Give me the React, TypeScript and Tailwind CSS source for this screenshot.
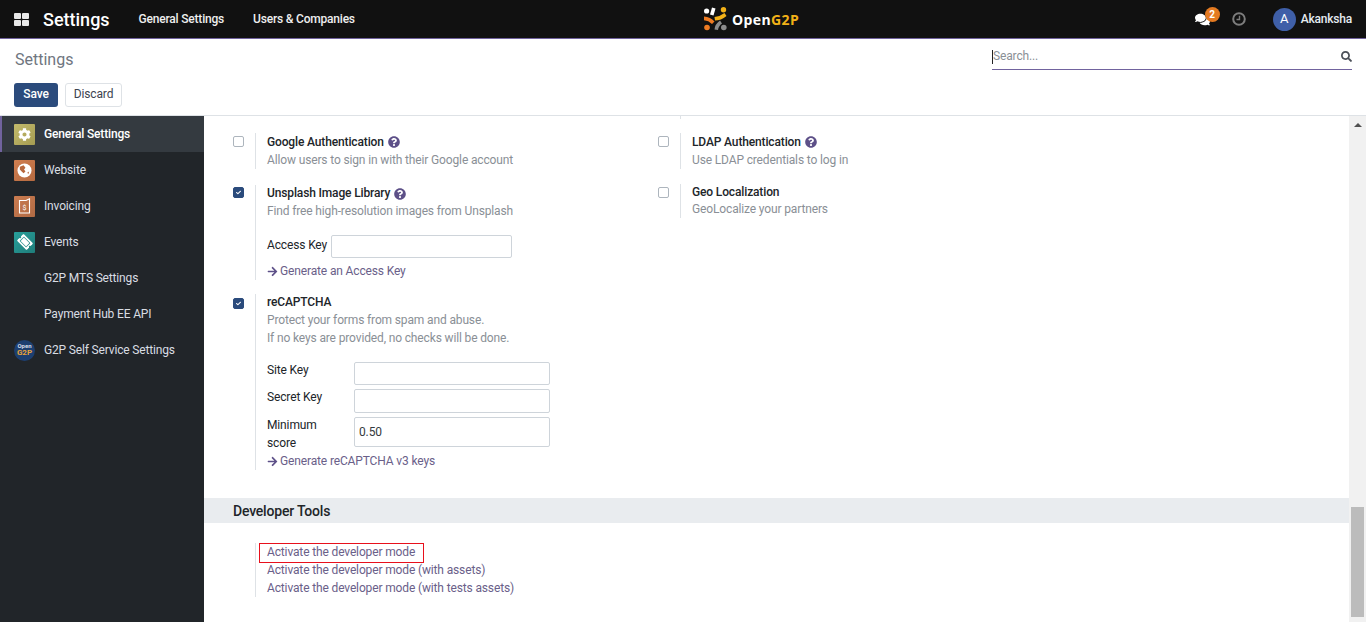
import * as React from "react";
import { FaComments, FaCog, FaQuestionCircle, FaArrowRight, FaCheck, FaTicketAlt, FaSearch } from "react-icons/fa";

const AppIcon: React.FC<{ bg: string; children: React.ReactNode }> = ({ bg, children }) => (
  <span className={`flex h-[21px] w-[21px] items-center justify-center rounded-[1px] bg-linear-to-br text-white ${bg}`}>
    {children}
  </span>
);

const GlobeIcon = () => (
  <svg width="15" height="15" viewBox="0 0 16 16">
    <circle cx="8" cy="8" r="7.5" fill="#fff" />
    <path d="M3 4 L7 2.5 L9 5 L7.5 7 L9 9 L7 11 L5 9 L3 7 Z M11 10 L13 9 L12 12 Z" fill="#b8683d" />
  </svg>
);

const InvoiceIcon = () => (
  <svg width="13" height="16" viewBox="0 0 13 16" fill="none" stroke="#fff" strokeWidth="1.1">
    <path d="M1.5 2.5 H8 L11.5 .8 V15 H1.5 Z" />
    <text x="6.5" y="11.5" fontSize="7" fill="#fff" stroke="none" textAnchor="middle" fontFamily="Roboto, sans-serif">$</text>
  </svg>
);

const G2pBadge = () => (
  <span className="flex h-[21px] w-[21px] flex-col items-center justify-center rounded-full bg-[#1d3f70] font-bold">
    <span className="text-[6px] leading-[6px] text-[#d5dce6]">Open</span>
    <span className="text-[8px] leading-[8px] text-[#e8a33a]">G2P</span>
  </span>
);

const sideItems: { label: string; icon?: React.ReactNode; active?: boolean }[] = [
  { label: "General Settings", active: true, icon: <AppIcon bg="from-[#c4bb6c] to-[#a59c52]"><FaCog size={13} /></AppIcon> },
  { label: "Website", icon: <AppIcon bg="from-[#d17f50] to-[#b56a40]"><GlobeIcon /></AppIcon> },
  { label: "Invoicing", icon: <AppIcon bg="from-[#cb7c50] to-[#b06a44]"><InvoiceIcon /></AppIcon> },
  { label: "Events", icon: <AppIcon bg="from-[#28a09b] to-[#1f7d7a]"><FaTicketAlt size={14} className="rotate-45" /></AppIcon> },
  { label: "G2P MTS Settings" },
  { label: "Payment Hub EE API" },
  { label: "G2P Self Service Settings", icon: <G2pBadge /> },
];

const Logo = () => (
  <div className="flex items-center">
    <svg width="23" height="24" viewBox="0 0 23 24">
      <circle cx="2.6" cy="4" r="2.6" fill="#fff" />
      <path d="M8 .5 L11.5 1.5 L9.5 8.5 L6 7.5 Z" fill="#fff" />
      <circle cx="19.5" cy="2.8" r="2.7" fill="#f2b118" />
      <path d="M10.5 10 Q16 9.5 20.5 6 L22.5 9 Q17 13.5 11 13.5 Z" fill="#f2b118" />
      <path d="M0 9.5 Q6.5 10 10.5 14.5 L8 17 Q4.5 13.5 0 13.2 Z" fill="#ee7b22" />
      <circle cx="3" cy="20.5" r="2.8" fill="#ee7b22" />
      <path d="M10.5 22.5 Q11 17 16 13.5 L18 16.5 Q14.5 19 14 23 Z" fill="#8c8c8c" />
      <circle cx="19.8" cy="20.5" r="2.8" fill="#8c8c8c" />
    </svg>
    <span className="ml-[5px] text-[14px] font-bold tracking-[0.4px] text-white font-['Open_Sans',sans-serif]">
      Open<span className="text-[#f2b118]">G2P</span>
    </span>
  </div>
);

const Navbar = () => (
  <header className="flex h-[39px] shrink-0 items-center border-b border-[#71639e] bg-[#111111] text-white">
    <div className="flex w-[683px] items-center">
      <div className="ml-[14px] grid h-[13px] w-[15px] grid-cols-2 gap-[1px]">
        <span className="rounded-[1px] bg-[#e9e9e9]" />
        <span className="rounded-[1px] bg-[#e9e9e9]" />
        <span className="rounded-[1px] bg-[#e9e9e9]" />
        <span className="rounded-[1px] bg-[#e9e9e9]" />
      </div>
      <span className="ml-[14px] text-[18px] font-medium">Settings</span>
      <span className="ml-[29px] text-[12px] font-medium tracking-[-0.2px] text-[#eeeeee]">General Settings</span>
      <span className="ml-[29px] text-[12px] font-medium tracking-[-0.2px] text-[#eeeeee]">Users &amp; Companies</span>
    </div>
    <div className="ml-[21px]"><Logo /></div>
    <div className="ml-auto flex items-center pr-[14px]">
      <span className="relative mr-[22px]">
        <FaComments size={15} className="text-white" />
        <span className="absolute left-[10px] -top-[5px] flex h-[15px] w-[15px] items-center justify-center rounded-full bg-[#e47a21] text-[10px] font-bold">2</span>
      </span>
      <svg width="14" height="14" viewBox="0 0 14 14" fill="none" stroke="#7d7d7d" className="mr-[27px]">
        <circle cx="7" cy="7" r="5.8" strokeWidth="2" />
        <path d="M7.5 3.8 V7.5 H4.5" strokeWidth="1.4" />
      </svg>
      <span className="mr-[5px] flex h-[23px] w-[23px] items-center justify-center rounded-full bg-[#3f5fa8] text-[13px]">A</span>
      <span className="text-[12px] font-medium tracking-[-0.2px] text-[#e6ecf2]">Akanksha</span>
    </div>
  </header>
);

const ControlPanel = () => (
  <div className="flex h-[77px] shrink-0 border-b border-[#dee2e6] bg-white">
    <div className="flex flex-1 flex-col pl-[14px]">
      <div className="mt-[9px] pl-px text-[16px] leading-[24px] text-[#6f7680]">Settings</div>
      <div className="mt-[11px] flex gap-[7px]">
        <button className="h-[24px] w-[44px] rounded-[3px] bg-[#2b4b7c] pb-[2px] text-[12px] font-medium tracking-[-0.14px] text-white">Save</button>
        <button className="h-[24px] w-[57px] rounded-[3px] border border-[#dee2e6] bg-white pb-[2px] text-[12px] tracking-[-0.14px] text-[#3c4350]">Discard</button>
      </div>
    </div>
    <div className="mr-[14px] mt-[8px] flex h-[23px] w-[360px] items-start border-b border-[#71639e] pt-[3px]">
      <span className="h-[14px] w-px bg-[#222]" />
      <span className="-mt-px flex-1 text-[12px] leading-[14px] tracking-[-0.14px] text-[#8a8f96]">Search...</span>
      <FaSearch size={11} className="mt-[1px] text-[#4b5058]" />
    </div>
  </div>
);

const Sidebar = () => (
  <nav className="w-[204px] shrink-0 bg-[#212529]">
    {sideItems.map((item) => (
      <div
        key={item.label}
        className={`flex h-[36px] items-center border-l-2 pl-[12px] ${item.active ? "border-[#71639e] bg-[#343a40] text-white" : "border-transparent text-[#d9dde3]"}`}
      >
        <span className="flex w-[30px] shrink-0">{item.icon}</span>
        <span className={`text-[12px] tracking-[-0.16px] ${item.active ? "font-medium" : ""}`}>{item.label}</span>
      </div>
    ))}
  </nav>
);

const Checkbox: React.FC<{ checked?: boolean; offset: string }> = ({ checked, offset }) => (
  <span className={`flex h-[11px] w-[11px] items-center justify-center rounded-[2px] border ${offset} ${checked ? "border-[#2b4b7c] bg-[#2b4b7c]" : "border-[#adb5bd] bg-white"}`}>
    {checked && <FaCheck size={5} className="text-white" />}
  </span>
);

const Help = () => <FaQuestionCircle size={12} className="ml-[4px] text-[#5d5088]" />;

interface SettingProps {
  checked?: boolean;
  title: string;
  help?: boolean;
  tight?: boolean;
  offset?: string;
  children?: React.ReactNode;
}

const Setting: React.FC<SettingProps> = ({ checked, title, help, tight, offset = "mt-[3px]", children }) => (
  <div className="flex">
    <div className="w-[34px] shrink-0 pl-[12px]"><Checkbox checked={checked} offset={offset} /></div>
    <div className="border-l border-[#dee2e6] pl-[11px]">
      <div className={`flex items-center text-[12px] font-medium tracking-[-0.14px] text-[#212529] ${tight ? "leading-[17px]" : "leading-[18px]"}`}>
        {title}
        {help && <Help />}
      </div>
      {children}
    </div>
  </div>
);

const Muted: React.FC<{ children: React.ReactNode }> = ({ children }) => (
  <div className="text-[12px] leading-[18px] tracking-[-0.14px] text-[#8a8f96]">{children}</div>
);

const LinkArrow: React.FC<{ children: React.ReactNode }> = ({ children }) => (
  <div className="flex items-center text-[12px] leading-[18px] tracking-[-0.14px] text-[#6a6089]">
    <FaArrowRight size={11} className="mr-[2px] text-[#5d5088]" />
    {children}
  </div>
);

const TextBox: React.FC<{ className: string; value?: string }> = ({ className, value }) => (
  <div className={`flex items-center rounded-[2px] border border-[#ced4da] pl-[4px] text-[12px] tracking-[-0.14px] text-[#343a40] ${className}`}>{value}</div>
);

const Content = () => (
  <main className="flex min-w-0 flex-1 flex-col overflow-hidden bg-white">
    <div className="ml-[17px] flex h-[382px]">
      <div className="flex w-[425px] flex-col pt-[17px]">
        <Setting title="Google Authentication" help>
          <Muted>Allow users to sign in with their Google account</Muted>
        </Setting>
        <div className="mt-[16px]">
          <Setting checked tight offset="mt-[2px]" title="Unsplash Image Library" help>
            <Muted>Find free high-resolution images from Unsplash</Muted>
            <div className="mt-[15px] flex h-[23px] text-[12px] leading-[20px] tracking-[-0.14px] text-[#212529]">
              Access Key
              <TextBox className="ml-[4px] h-[23px] w-[181px]" />
            </div>
            <div className="mt-[4px]"><LinkArrow>Generate an Access Key</LinkArrow></div>
          </Setting>
        </div>
        <div className="mt-[14px]">
          <Setting checked tight offset="mt-[4px]" title="reCAPTCHA">
            <Muted>Protect your forms from spam and abuse.</Muted>
            <Muted>If no keys are provided, no checks will be done.</Muted>
            <div className="mt-[15px] grid grid-cols-[87px_196px] gap-y-[4px] text-[12px] leading-[16px] tracking-[-0.14px] text-[#212529]">
              <span>Site Key</span>
              <TextBox className="h-[23px]" />
              <span>Secret Key</span>
              <TextBox className="h-[24px]" />
              <span className="-mt-[1px] w-[60px] leading-[18px]">Minimum score</span>
              <TextBox className="h-[30px]" value="0.50" />
            </div>
            <LinkArrow>Generate reCAPTCHA v3 keys</LinkArrow>
          </Setting>
        </div>
      </div>
      <div className="flex w-[425px] flex-col">
        <div className="ml-[34px] h-[3px] w-px bg-[#dee2e6]" />
        <div className="mt-[14px]">
          <Setting title="LDAP Authentication" help>
            <Muted>Use LDAP credentials to log in</Muted>
          </Setting>
        </div>
        <div className="mt-[15px]">
          <Setting tight title="Geo Localization">
            <div className="-mt-px"><Muted>GeoLocalize your partners</Muted></div>
          </Setting>
        </div>
      </div>
    </div>
    <div className="flex h-[25px] items-center bg-[#e9ecef] pl-[29px] pt-[1px] text-[14px] font-medium tracking-[-0.2px] text-[#212529]">Developer Tools</div>
    <div className="ml-[51px] mt-[20px] w-fit border-l border-[#dee2e6] pl-[11px] text-[12px] leading-[18px] tracking-[-0.14px] text-[#6a6089]">
      <div className="relative pt-px leading-[17px]">
        Activate the developer mode
        <span className="absolute -left-[8px] top-0 h-[20px] w-[165px] border border-[#e8101c]" />
      </div>
      <div>Activate the developer mode (with assets)</div>
      <div>Activate the developer mode (with tests assets)</div>
    </div>
  </main>
);

const Scrollbar = () => (
  <div className="flex w-[17px] shrink-0 flex-col items-center bg-[#f1f1f1]">
    <span className="mt-[7px] h-0 w-0 border-x-[4px] border-b-[4px] border-x-transparent border-b-[#505050]" />
    <span className="mt-auto mb-[5px] h-[110px] w-[13px] bg-[#bcbcbc]" />
  </div>
);

export default function App() {
  return (
    <div className="flex h-[622px] w-[1366px] flex-col overflow-hidden bg-white font-['Roboto',sans-serif]">
      <Navbar />
      <ControlPanel />
      <div className="flex min-h-0 flex-1">
        <Sidebar />
        <Content />
        <Scrollbar />
      </div>
    </div>
  );
}
